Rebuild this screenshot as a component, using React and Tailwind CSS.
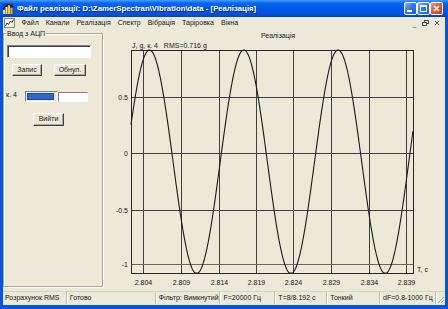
import React from "react";

const F = "font-['Liberation_Sans',Arial,sans-serif]";

function wavePath() {
  let d = "";
  for (let x = 131; x <= 413; x += 0.5) {
    let y = 161.8 - 111.8 * Math.cos((2 * Math.PI * (x - 149.5)) / 94.3);
    y = Math.min(273, Math.max(50, y));
    d += (x === 131 ? "M" : "L") + x.toFixed(1) + "," + y.toFixed(1);
  }
  return d;
}

const vx = [143, 181, 219, 256, 293, 331, 369, 406];
const xl = ["2.804", "2.809", "2.814", "2.819", "2.824", "2.829", "2.834", "2.839"];

function Plot() {
  const ts = { fontFamily: "'Liberation Sans', Arial, sans-serif", fontSize: 7, fill: "#202020" };
  return (
    <svg width="341" height="262" viewBox="104 29 341 262" className="block">
      <text x="278" y="37.5" textAnchor="middle" style={ts}>Реалізація</text>
      <text x="132" y="47.5" style={ts}>J, g, к. 4&#160;&#160;&#160;RMS=0.716 g</text>
      {vx.map((x, i) => (
        <line key={i} x1={x + 0.5} y1="50" x2={x + 0.5} y2="273" stroke="#404040" strokeWidth="1" />
      ))}
      <line x1="131" y1="97.5" x2="413" y2="97.5" stroke="#404040" />
      <line x1="131" y1="153.5" x2="413" y2="153.5" stroke="#404040" />
      <line x1="131" y1="210.5" x2="413" y2="210.5" stroke="#404040" />
      <line x1="131" y1="264.5" x2="413" y2="264.5" stroke="#6a6a60" />
      <rect x="131.5" y="50.5" width="282" height="223" fill="none" stroke="#2a2a2a" />
      <path d={wavePath()} fill="none" stroke="#1a1a1a" strokeWidth="1.1" />
      <text x="128" y="100" textAnchor="end" style={ts}>0.5</text>
      <text x="128" y="156" textAnchor="end" style={ts}>0</text>
      <text x="128" y="213" textAnchor="end" style={ts}>-0.5</text>
      <text x="128" y="267" textAnchor="end" style={ts}>-1</text>
      {vx.map((x, i) => (
        <text key={i} x={x + 0.5} y="284.5" textAnchor="middle" style={ts}>{xl[i]}</text>
      ))}
      <text x="417" y="271.5" style={ts}>T, c</text>
    </svg>
  );
}

function XPButton({ children, red }) {
  return (
    <div
      className={
        "w-[13px] h-[13px] rounded-[2px] border border-white flex items-center justify-center " +
        (red
          ? "bg-[linear-gradient(135deg,#f0a080_0%,#e2603c_40%,#c8401c_100%)]"
          : "bg-[linear-gradient(135deg,#8cb8ff_0%,#3a7ef0_40%,#1a58d8_100%)]")
      }
    >
      {children}
    </div>
  );
}

function Btn({ children, w }) {
  return (
    <div
      className={
        "h-[12px] flex items-center justify-center text-[7px] text-[#202020] bg-[#ece9d8] border border-t-white border-l-white border-r-[#404040] border-b-[#404040] shadow-[inset_-1px_-1px_0_#aca899] " +
        w
      }
    >
      {children}
    </div>
  );
}

function StatusCell({ w, children }) {
  return (
    <div className={"h-full flex items-center pl-[2px] border-r border-[#c2bfa8] shadow-[1px_0_0_#fff] mr-[1px] " + w}>
      <span className="whitespace-nowrap">{children}</span>
    </div>
  );
}

export default function App() {
  return (
    <div className={"w-[448px] h-[309px] flex flex-col bg-[#0555e4] overflow-hidden " + F}>
      {/* Title bar */}
      <div className="h-[17px] flex items-center pl-[2px] pr-[5px] bg-[linear-gradient(to_bottom,#4a9cff_0%,#0a66f0_18%,#0058e6_50%,#0052de_85%,#0044c0_100%)]">
        <svg width="12" height="12" viewBox="0 0 12 12" className="shrink-0">
          <rect x="0.5" y="0.5" width="11" height="11" fill="#1e40a0" />
          <path d="M1,11 L1,7 L3,7 L3,11 Z" fill="#ffd84a" />
          <path d="M3.5,11 L3.5,4 L5.5,4 L5.5,11 Z" fill="#ffe070" />
          <path d="M6,11 L6,2 L8,2 L8,11 Z" fill="#ffc830" />
          <path d="M8.5,11 L8.5,5 L10.5,5 L10.5,11 Z" fill="#f0b020" />
          <path d="M1,6 L4,3 L7,1.5 L11,4" stroke="#000" strokeWidth="0.8" fill="none" />
        </svg>
        <span className="ml-[3px] text-white font-bold text-[7.8px] tracking-[0px] whitespace-nowrap [text-shadow:1px_1px_0_#0a2a80]">
          Файл реалізації: D:\ZamerSpectran\Vibration\data - [Реалізація]
        </span>
        <div className="ml-auto flex gap-[0px]">
          <XPButton>
            <div className="w-[5px] h-[2px] bg-white mt-[5px] -ml-[2px]" />
          </XPButton>
          <XPButton>
            <div className="w-[7px] h-[7px] border border-white border-t-2" />
          </XPButton>
          <XPButton red>
            <svg width="7" height="7" viewBox="0 0 7 7">
              <path d="M1,1 L6,6 M6,1 L1,6" stroke="#fff" strokeWidth="1.5" />
            </svg>
          </XPButton>
        </div>
      </div>

      {/* Client */}
      <div className="flex-1 flex flex-col mx-[3px] mb-[4px] bg-[#ece9d8] text-[#202020]">
        {/* Menu */}
        <div className="h-[12px] flex items-center text-[7px] pl-[1px] pr-[1px]">
          <svg width="11" height="10" viewBox="0 0 11 10" className="shrink-0">
            <rect x="0.5" y="0.5" width="10" height="9" fill="#f4f2ea" stroke="#8a8a80" />
            <path d="M1.5,8 L3,5 L4.5,6.5 L6.5,3 L8,4.5 L9.5,1.5" stroke="#202020" strokeWidth="0.9" fill="none" />
          </svg>
          <div className="flex ml-[3px]">
            <span className="px-[3.5px]">Файл</span>
            <span className="px-[3.5px]">Канали</span>
            <span className="px-[3.5px]">Реалізація</span>
            <span className="px-[3.5px]">Спектр</span>
            <span className="px-[3.5px]">Вібрація</span>
            <span className="px-[3.5px]">Таріровка</span>
            <span className="px-[3.5px]">Вікна</span>
          </div>
          <div className="ml-auto flex text-[#505050] mr-[2px]">
            <span className="w-[11px] text-center text-[7px] leading-none">_</span>
            <span className="w-[11px] flex justify-center">
              <svg width="7" height="6" viewBox="0 0 7 6">
                <rect x="2.5" y="0.5" width="4" height="3" fill="none" stroke="#505050" />
                <rect x="0.5" y="2.5" width="4" height="3" fill="#ece9d8" stroke="#505050" />
              </svg>
            </span>
            <span className="w-[11px] flex justify-center">
              <svg width="6" height="6" viewBox="0 0 6 6">
                <path d="M1,1 L5,5 M5,1 L1,5" stroke="#505050" strokeWidth="1" />
              </svg>
            </span>
          </div>
        </div>

        {/* Content */}
        <div className="flex-1 flex">
          {/* Left panel */}
          <div className="w-[101px] pt-[4px]">
            <div className="relative h-[254px] w-[100px] border border-[#aca899] shadow-[inset_1px_1px_0_#fff,1px_1px_0_#fff] flex flex-col">
              <span className="absolute -top-[5px] left-[2px] px-[1px] bg-[#ece9d8] text-[7px] leading-[9px]">
                Ввод з АЦП
              </span>
              <div className="ml-[3px] mt-[11px] w-[84px] h-[13px] bg-white border border-t-[#808080] border-l-[#808080] border-r-white border-b-white shadow-[inset_1px_1px_0_#404040]" />
              <div className="flex mt-[6px]">
                <Btn w="w-[30px] ml-[8px]">Запис</Btn>
                <Btn w="w-[32px] ml-[12px]">Обнул.</Btn>
              </div>
              <div className="flex items-center mt-[15px] h-[11px]">
                <span className="ml-[2px] w-[19px] text-[7px] -mt-[2px]">к. 4</span>
                <div className="w-[33px] h-[11px] border border-t-[#808080] border-l-[#808080] border-r-white border-b-white bg-[#ece9d8] p-[1px]">
                  <div className="w-[27px] h-full bg-[#3168c8] border border-[#1c4aa0]" />
                </div>
                <div className="w-[30px] h-[10px] bg-white border border-t-[#808080] border-l-[#808080] border-r-white border-b-white" />
              </div>
              <div className="flex mt-[11px]">
                <Btn w="w-[31px] h-[13px] ml-[29px]">Вийти</Btn>
              </div>
            </div>
          </div>
          <Plot />
        </div>

        {/* Status bar */}
        <div className="h-[14px] flex items-center text-[7px] border-t border-[#d8d4c4] pb-[1px]">
          <StatusCell w="w-[64px]">Розрахунок RMS</StatusCell>
          <StatusCell w="w-[88px]">Готово</StatusCell>
          <StatusCell w="w-[64px]">Фільтр: Вимкнутий</StatusCell>
          <StatusCell w="w-[54px]">F=20000 Гц</StatusCell>
          <StatusCell w="w-[51px]">T=8/8.192 с</StatusCell>
          <StatusCell w="w-[52px]">Тонкий</StatusCell>
          <StatusCell w="w-[55px]">dF=0.8-1000 Гц</StatusCell>
          <div className="flex-1 h-full flex items-end justify-end">
            <svg width="8" height="8" viewBox="0 0 8 8">
              <path d="M7,1 L1,7 M7,4 L4,7 M7,6.5 L6.5,7" stroke="#aca899" strokeWidth="1" />
              <path d="M7.8,1.8 L1.8,7.8 M7.8,4.8 L4.8,7.8" stroke="#fff" strokeWidth="0.7" />
            </svg>
          </div>
        </div>
      </div>
    </div>
  );
}
